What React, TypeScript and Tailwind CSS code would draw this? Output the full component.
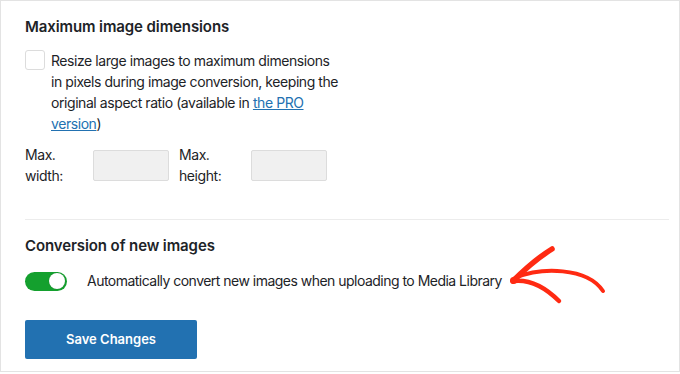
import React, { useState } from 'react';

/**
 * Image conversion settings panel
 */
const ArrowMark: React.FC = () => (
  <svg
    className="absolute left-[500px] top-[240px] pointer-events-none"
    width="120"
    height="70"
    viewBox="0 0 120 70"
    fill="none"
  >
    <g stroke="#ff2a12" strokeLinecap="round" strokeLinejoin="round">
      {/* upper head */}
      <path d="M12 40 C22 30 38 16 51 8" strokeWidth="5.5" />
      {/* shaft */}
      <path d="M14 37 C40 26 86 26 102 50" strokeWidth="4" />
      {/* lower head */}
      <path d="M12 40 C28 38 44 46 58 60" strokeWidth="4.5" />
      <circle cx="12.5" cy="39.5" r="3.5" fill="#ff2a12" stroke="none" />
    </g>
  </svg>
);

const App: React.FC = () => {
  const [resize, setResize] = useState(false);
  const [autoConvert, setAutoConvert] = useState(true);

  return (
    <div
      className="bg-white w-[680px] h-[374px] text-[#1d2327]"
      style={{ fontFamily: 'Inter, "Noto Sans", sans-serif' }}
    >
      <div className="relative h-[372px] border border-[#e3e3e3] pt-4 pl-6 pr-[10px]">
        {/* Max dimensions */}
        <h2 className="text-[15px] leading-5 font-semibold tracking-[-0.1px]">
          Maximum image dimensions
        </h2>

        <div className="flex items-start gap-[6px] mt-[13px]">
          <button
            onClick={() => setResize(!resize)}
            className="w-5 h-5 shrink-0 border border-[#dcdcdc] rounded-[3px] bg-white"
          />
          <p className="text-[14px] leading-[21px] tracking-[-0.43px] w-[288px]">
            Resize large images to maximum dimensions in pixels during image conversion, keeping the
            original aspect ratio (available in{' '}
            <a href="#" className="text-[#2271b1] underline">
              the PRO version
            </a>
            )
          </p>
        </div>

        <div className="flex items-center h-[42px] mt-[10px] text-[14px] leading-[21px] tracking-[-0.43px]">
          <label className="w-[68px]">
            Max.
            <br />
            width:
          </label>
          <input
            disabled
            className="w-[76px] h-[31px] bg-[#f0f0f0] border border-[#dcdcdc] rounded-[2px]"
          />
          <label className="w-[72px] ml-[10px]">
            Max.
            <br />
            height:
          </label>
          <input
            disabled
            className="w-[76px] h-[31px] bg-[#f0f0f0] border border-[#dcdcdc] rounded-[2px]"
          />
        </div>

        <div className="border-t border-[#ececec] mt-[33px]" />

        {/* New images */}
        <h2 className="text-[15px] leading-5 font-semibold tracking-[-0.1px] mt-4">
          Conversion of new images
        </h2>

        <div className="flex items-center gap-5 mt-[15px] h-5">
          <button
            onClick={() => setAutoConvert(!autoConvert)}
            className={`w-[42px] h-[19px] rounded-full flex items-center p-[2px] ${
              autoConvert ? 'bg-[#14a02e] justify-end' : 'bg-[#c3c4c7] justify-start'
            }`}
          >
            <span className="w-[16px] h-[16px] rounded-full bg-white shadow-[0_0_1px_rgba(0,0,0,0.3)]" />
          </button>
          <span className="text-[14px] leading-5 tracking-[-0.52px]">
            Automatically convert new images when uploading to Media Library
          </span>
        </div>

        <button className="mt-[29px] w-[172px] h-[39px] bg-[#2271b1] text-white text-[13px] font-semibold rounded-[2px]">
          Save Changes
        </button>

        <ArrowMark />
      </div>
    </div>
  );
};

export default App;
